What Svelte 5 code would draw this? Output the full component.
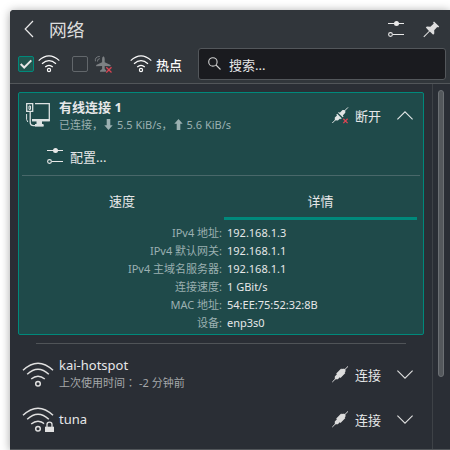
<script>
  const details = [
    ['IPv4 地址:', '192.168.1.3'],
    ['IPv4 默认网关:', '192.168.1.1'],
    ['IPv4 主域名服务器:', '192.168.1.1'],
    ['连接速度:', '1 GBit/s'],
    ['MAC 地址:', '54:EE:75:52:32:8B'],
    ['设备:', 'enp3s0']
  ];
  const networks = [
    { name: 'kai-hotspot', used: '-2 分钟前', locked: false },
    { name: 'tuna', used: '', locked: true }
  ];
</script>

{#snippet wifiSmall()}
  <svg width="22" height="18" viewBox="0 0 22 18" fill="none" stroke="#fcfcfc" stroke-width="1.15">
    <path d="M.7 5.6Q11-3.8 21.3 5.6M4 8.8Q11 2.6 18 8.8M7.2 12Q11 8.6 14.8 12" />
    <circle cx="11" cy="15" r="1.6" />
  </svg>
{/snippet}

{#snippet sliders()}
  <svg width="16" height="16" viewBox="0 0 16 16" fill="none" stroke="#e8e8e8">
    <path d="M0 2.5h16M5 13.5h11" />
    <circle cx="8.5" cy="2.5" r="2.5" fill="#e8e8e8" stroke="none" />
    <circle cx="2.5" cy="13.5" r="1.9" stroke-width="1.1" />
  </svg>
{/snippet}

{#snippet arrow(up)}
  <svg class="arrow" width="9" height="11" viewBox="0 0 9 11" fill="#9bb0b1">
    {#if up}
      <path d="M4.5 0 8.7 4.8H6.3V11H2.7V4.8H.3z" />
    {:else}
      <path d="M4.5 11 8.7 6.2H6.3V0H2.7v6.2H.3z" />
    {/if}
  </svg>
{/snippet}

<div class="window">
  <header>
    <div class="titlebar">
      <svg width="10" height="18" viewBox="0 0 10 18" fill="none" stroke="#eaeaea" stroke-width="1.2"><path d="M9 1 1.2 9 9 17" /></svg>
      <h1>网络</h1>
      {@render sliders()}
      <svg class="pin" width="17" height="17" viewBox="0 0 17 17" fill="#dedede">
        <path d="M11 .5 16.2 5.6 15.2 6.6 14.2 6.1 11.2 9.3 11.3 12.6 10.2 13.7 6.8 10.6 1.2 16.2 .4 15.5 6 9.9 2.8 6.6 3.9 5.5 7.4 5.7 10.8 2.6 10.1 1.4z" />
      </svg>
    </div>
    <div class="toolbar">
      <span class="check on">
        <svg width="14" height="14" viewBox="0 0 14 14" fill="none" stroke="#e8e8e8" stroke-width="2"><path d="M1.7 7 5.2 10.5 12.3 3.4" /></svg>
      </span>
      <span class="wifi-a">{@render wifiSmall()}</span>
      <span class="check"></span>
      <svg class="plane" width="18" height="18" viewBox="0 0 18 18">
        <path fill="#7d8184" d="M9.4 1.2Q10.7 2 10.7 4V7.3L16.6 10V11.3L10.7 11V14L12.8 15.8V16.8H6V15.8L8.1 14V11L2.2 11.3V10L8.1 7.3V4Q8.1 2 9.4 1.2z" />
        <path fill="none" stroke="#7d8184" stroke-width=".9" d="M1.4 6.3Q.6 1.8 5.8 1.4M3.5 6.5Q3 4 5.9 3.6" />
        <path fill="none" stroke="#31363b" stroke-width="2.4" d="m12.5 12.4 4.8 4.8m0-4.8-4.8 4.8" />
        <path fill="none" stroke="#da4453" stroke-width="1.3" d="m12.3 12.3 5.2 5.2m0-5.2-5.2 5.2" />
      </svg>
      <span class="wifi-b">{@render wifiSmall()}</span>
      <span class="hotspot">热点</span>
      <div class="search">
        <svg width="13" height="13" viewBox="0 0 13 13" fill="none" stroke="#d0d0d0" stroke-width="1.1"><circle cx="4.9" cy="4.9" r="4.2" /><path d="m8 8 4.5 4.5" /></svg>
        <span>搜索...</span>
      </div>
    </div>
  </header>

  <div class="body">
    <main>
      <section class="card">
        <div class="row active">
          <svg class="wired" width="24" height="24" viewBox="0 0 24 24" fill="none" stroke="#dde3e3" stroke-width="1.3">
            <path d="M.7.7h6v7.6h-6zM9 .7h14.3v17H6M4.2 8.5v10.8q0 3.4 3.4 3.4H17.5" />
            <path d="M3 3h1.5v3.4H3zM.6 11v5.5L1.8 19" stroke-width="1" />
            <path d="M6 16h17.5v2.3H6zM10.5 18h5.5v3h1.5v2.4H9V21h1.5z" fill="#dde3e3" stroke="none" />
          </svg>
          <div class="names">
            <strong>有线连接 1</strong>
            <small>已连接，{@render arrow(false)}<span>5.5 KiB/s，</span>{@render arrow(true)}<span>5.6 KiB/s</span></small>
          </div>
          <svg class="plug" width="17" height="17" viewBox="0 0 17 17">
            <path stroke="#e0e4e4" d="M.3 16 4 12.3M12 4.4 16 .4" />
            <path fill="#e0e4e4" d="M2.8 13.2V10.6L5 8.4 4.3 7.7 5.2 6.8 9.7 11.3 8.8 12.2 8.1 11.5 5.9 13.4zM6.9 5 7.8 5.8 10.5 3H12.2L13.3 4.1V5.8L10.8 8.6 11.6 9.4 10.7 10.3 6.1 5.8z" />
            <path fill="none" stroke="#da4453" stroke-width="1.3" d="m11.3 11.8 4.3 4.3m0-4.3-4.3 4.3" />
          </svg>
          <span class="action">断开</span>
          <svg class="chev" width="16" height="9" viewBox="0 0 16 9" fill="none" stroke="#e4e8e8" stroke-width="1.1"><path d="M.4 8.3 8 .8l7.6 7.5" /></svg>
        </div>
        <div class="config">{@render sliders()}<span>配置...</span></div>
        <div class="tabs">
          <div>速度</div>
          <div class="current">详情</div>
        </div>
        <dl>
          {#each details as [label, value]}
            <dt>{label}</dt><dd>{value}</dd>
          {/each}
        </dl>
      </section>

      <hr />

      {#each networks as net}
        <div class="row available">
          <svg class="signal" width="33" height="26" viewBox="0 0 33 26" fill="none" stroke="#e0e0e0" stroke-width="1.5">
            <path d="M1 8.3Q16-5.9 31 8.3M5.2 12.2Q16 2.2 26.8 12.2M9.2 17Q16 11.6 22.8 17" />
            <circle cx="16" cy="21.7" r="2.3" />
            {#if net.locked}
              <path d="M22.2 14.8h11v12h-11z" fill="#2a2e35" stroke="none" />
              <path d="M23 19.7h9v5.3h-9z" fill="#e0e0e0" stroke="none" />
              <path d="M25 20v-2.6q0-2.2 2.5-2.2t2.5 2.2v2.6" stroke-width="1.3" />
            {/if}
          </svg>
          <div class="names">
            <b>{net.name}</b>
            {#if net.used}<small><span>上次使用时间</span><i>：</i><span>{net.used}</span></small>{/if}
          </div>
          <svg class="plug" width="17" height="17" viewBox="0 0 17 17">
            <path stroke="#dcdcdc" d="M.3 16 16 .4" />
            <path fill="#dcdcdc" d="M2.8 13.2V10.4L4.9 8.3 4.2 7.6 9.2 2.6 9.9 3.3 10.6 2.7H12.4L13.5 3.8V5.6L12.7 6.4 13.4 7.1 8.5 12 7.8 11.3 5.8 13.3z" />
          </svg>
          <span class="action">连接</span>
          <svg class="chev" width="16" height="9" viewBox="0 0 16 9" fill="none" stroke="#e0e0e0" stroke-width="1.1"><path d="M.4.7 8 8.2 15.6.7" /></svg>
        </div>
      {/each}
    </main>
    <aside><div class="thumb"></div></aside>
  </div>
</div>

<style>
  :global(body) {
    background: #fff;
    overflow: hidden;
  }
  .window {
    box-sizing: border-box;
    width: 440px;
    height: 440px;
    margin: 10px 0 0 10px;
    background: #2a2e35;
    border-bottom: 1px solid #52565a;
    border-top-left-radius: 4px;
    box-shadow: 0 1px 10px rgba(0, 0, 0, 0.36);
    color: #e6e7e8;
    font: 13px/18px 'Noto Sans', 'Noto Sans CJK SC', sans-serif;
    display: flex;
    flex-direction: column;
    white-space: nowrap;
  }
  svg { display: block; flex: none; }
  header {
    box-sizing: border-box;
    height: 74px;
    background: #31363b;
    border-bottom: 1px solid #52565a;
    border-top-left-radius: 4px;
  }
  .titlebar {
    height: 38px;
    display: flex;
    align-items: center;
    padding: 0 10px 0 14px;
  }
  h1 {
    margin: 2px auto 0 15px;
    font-size: 17.8px;
    line-height: 24px;
    font-weight: 400;
    color: #dcdddd;
  }
  .pin { margin-left: 19px; }
  .toolbar {
    height: 32px;
    display: flex;
    align-items: center;
    padding-left: 8px;
  }
  .check {
    box-sizing: border-box;
    width: 16px;
    height: 16px;
    border: 1px solid #62676b;
    border-radius: 2px;
  }
  .check.on { background: #22564f; border-color: #00897b; }
  .wifi-a { margin: 0 12px 0 4px; }
  .plane { margin: 0 18px 0 6px; }
  .hotspot {
    width: 27px;
    margin: 1px 15px 0 4px;
    font-weight: 500;
    color: #fcfcfc;
  }
  .search {
    box-sizing: border-box;
    width: 248px;
    height: 32px;
    display: flex;
    align-items: center;
    gap: 8px;
    padding: 0 0 0 9px;
    background: #1a1b1f;
    border: 1px solid #53575b;
    border-radius: 3px;
  }
  .search svg { margin-top: -2px; }
  .search span { margin-top: 1px; }
  .body { flex: 1; display: flex; min-height: 0; }
  main { width: 422px; }
  aside {
    flex: 1;
    border-left: 1px solid #3e4247;
    padding: 6px 0 0 5px;
  }
  .thumb {
    box-sizing: border-box;
    width: 6px;
    height: 287px;
    background: #54585c;
    border: 1px solid #6c7074;
    border-radius: 3px;
  }
  .card {
    box-sizing: border-box;
    width: 406px;
    height: 243px;
    margin: 8px 0 0 8px;
    background: #1f4a4a;
    border: 1px solid #00897b;
    border-radius: 2px;
  }
  .row {
    height: 45px;
    display: flex;
    align-items: center;
    padding-left: 12px;
  }
  .row.active { height: 44px; padding-left: 7px; }
  .wired { margin-right: 9px; }
  .signal { margin-right: 4px; }
  .names { width: 273px; display: flex; flex-direction: column; }
  .available .names { margin-top: -2px; }
  strong, b { font-size: 13px; line-height: 18px; }
  b { font-weight: 400; }
  small {
    display: flex;
    align-items: center;
    font-size: 11px;
    line-height: 17px;
    color: #a5a8aa;
  }
  small i {
    width: 14px;
    font-style: normal;
    font-family: 'Noto Sans CJK TC', sans-serif;
  }
  .card small { color: #9bb0b1; }
  .arrow { margin: 0 4px 0 1px; }
  .action { margin: 2px 0 0 6px; width: 42px; }
  .available .action { margin-top: 1px; }
  .config {
    height: 38px;
    display: flex;
    align-items: center;
    gap: 7px;
    padding-left: 28px;
  }
  .config span { margin-top: 2px; }
  .tabs {
    box-sizing: border-box;
    height: 45px;
    margin: 0 3px;
    border-top: 1px solid #49686a;
    padding: 4px 3px 0 2px;
    display: flex;
    gap: 4px;
    text-align: center;
    line-height: 42px;
  }
  .tabs div { flex: 1; box-sizing: border-box; height: 40px; }
  .tabs .current { flex: 0 0 193px; border-bottom: 3px solid #00897b; }
  dl {
    display: grid;
    grid-template-columns: 203px auto;
    grid-auto-rows: 18px;
    column-gap: 5px;
    margin: 4px 0 0;
    font-size: 11px;
  }
  dt { text-align: right; color: #9bb0b1; }
  dd { margin: 0; }
  hr {
    width: 370px;
    height: 1px;
    margin: 8px 0 8px 26px;
    border: 0;
    background: #505458;
  }
</style>
